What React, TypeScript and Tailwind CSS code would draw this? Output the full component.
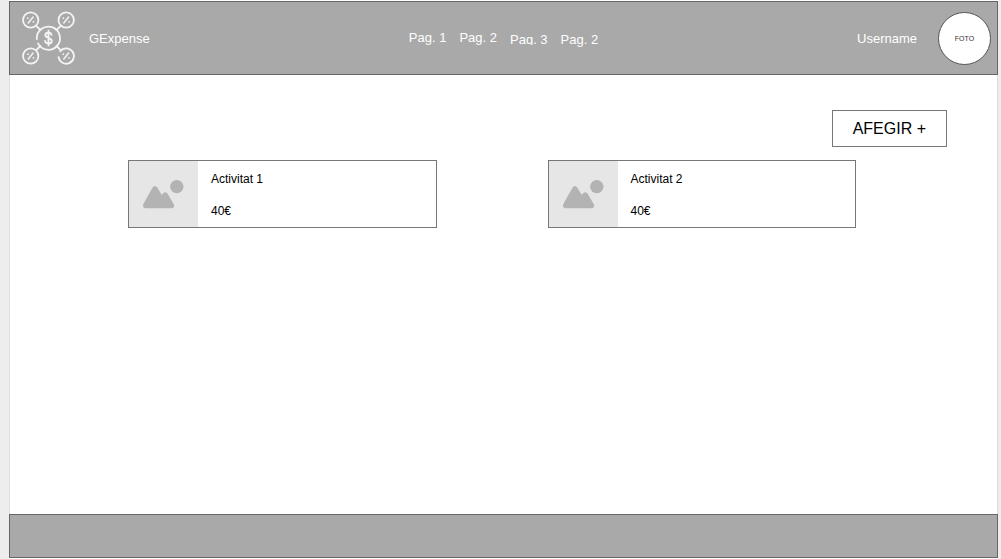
const nodes = [
  { x: 15.7, y: 15 },
  { x: 51.2, y: 15 },
  { x: 15.7, y: 51 },
];

function Percent({ x, y }: { x: number; y: number }) {
  return (
    <g>
      <path d={`M${x - 2.4} ${y + 3}L${x + 2.4} ${y - 3}`} strokeWidth="1.5" />
      <circle cx={x - 2.8} cy={y - 1.8} r="0.9" fill="#f4f4f4" stroke="none" />
      <circle cx={x + 2.8} cy={y + 1.8} r="0.9" fill="#f4f4f4" stroke="none" />
    </g>
  );
}

function Logo() {
  return (
    <svg width="66" height="66" viewBox="0 0 66 66" fill="none" stroke="#f4f4f4" strokeWidth="1.8" strokeLinecap="round" aria-hidden="true">
      {nodes.map((n) => (
        <g key={`${n.x}-${n.y}`}>
          <circle cx={n.x} cy={n.y} r="7.7" />
          <Percent x={n.x} y={n.y} />
        </g>
      ))}
      <path d="M43.6 52.2A7.7 7.7 0 1 0 45.2 46.2" />
      <Percent x={51.2} y={51} />
      <path d="M21.2 20.8L25.4 25M45.7 20.8L41.5 25M21.2 45.2L25.4 41M45.7 45.2L41.5 41" />
      <path d="M23 38.4A11.6 11.6 0 1 0 21.8 34" />
      <path d="M36.5 29.8C36.3 28.3 35.2 27.6 33.5 27.6C31.5 27.6 30.3 28.6 30.3 30.1C30.3 33.6 36.8 32.2 36.8 35.9C36.8 37.6 35.5 38.5 33.5 38.5C31.5 38.5 30.3 37.6 30.1 36M33.5 25.6V40.4" strokeWidth="1.9" />
    </svg>
  );
}

function Placeholder() {
  return (
    <svg viewBox="0 0 69 67" className="h-[66px] w-[69px] shrink-0 bg-[#e6e6e6]" fill="#b3b3b3" aria-hidden="true">
      <circle cx="48" cy="26" r="6.8" />
      <path d="M14.2 43.5L23.3 27.2Q25.8 23.8 28.3 27.2L32.5 34Q33 34.8 33.5 33.5Q36 30.3 38.7 33.2L45 44Q46.3 47.5 43 48H16.2Q12.5 47.5 14.2 43.5Z" />
    </svg>
  );
}

function Activity({ title, price }: { title: string; price: string }) {
  return (
    <article className="flex border border-[#777] bg-white">
      <Placeholder />
      <div className="flex flex-col gap-4 px-[13px] pt-[10px] text-xs text-black">
        <h2>{title}</h2>
        <p>{price}</p>
      </div>
    </article>
  );
}

export default function App() {
  return (
    <div className="min-h-screen bg-[#ededed] pr-[3px] pl-[9px] font-['Liberation_Sans',Arial,sans-serif]">
      <div className="flex min-h-screen flex-col bg-white py-px">
        <header className="grid h-[74px] grid-cols-[1fr_auto_1fr] items-center border border-[#666] bg-[#a9a9a9] text-[13px] text-white">
          <div className="flex items-center gap-2 pl-[5px]">
            <Logo />
            <span className="pt-0.5">GExpense</span>
          </div>
          <nav className="flex items-start gap-[13px] pt-0.5 leading-4">
            <a href="#1">Pag. 1</a>
            <a href="#2">Pag. 2</a>
            <a href="#3" className="pt-0.5">
              <span className="block h-[13px] overflow-hidden">Pag. 3</span>
            </a>
            <a href="#4" className="pt-0.5">Pag. 2</a>
          </nav>
          <div className="flex items-center justify-end gap-[21px] pr-1.5">
            <span className="pt-0.5">Username</span>
            <div className="flex size-[53px] items-center justify-center rounded-full border border-[#555] bg-white pt-0.5 text-[7px] text-[#333]">
              FOTO
            </div>
          </div>
        </header>
        <main className="flex-1 border-x border-[#ddd] pt-[35px]">
          <div className="flex justify-end pr-[50px]">
            <button type="button" className="border border-[#777] bg-white px-5 pt-1.5 pb-[5px] text-base text-black">
              AFEGIR +
            </button>
          </div>
          <section className="mt-[13px] grid grid-cols-2 gap-[111px] pr-[141px] pl-[118px]">
            <Activity title="Activitat 1" price="40€" />
            <Activity title="Activitat 2" price="40€" />
          </section>
        </main>
        <footer className="h-11 border border-[#666] bg-[#a9a9a9]" />
      </div>
    </div>
  );
}
